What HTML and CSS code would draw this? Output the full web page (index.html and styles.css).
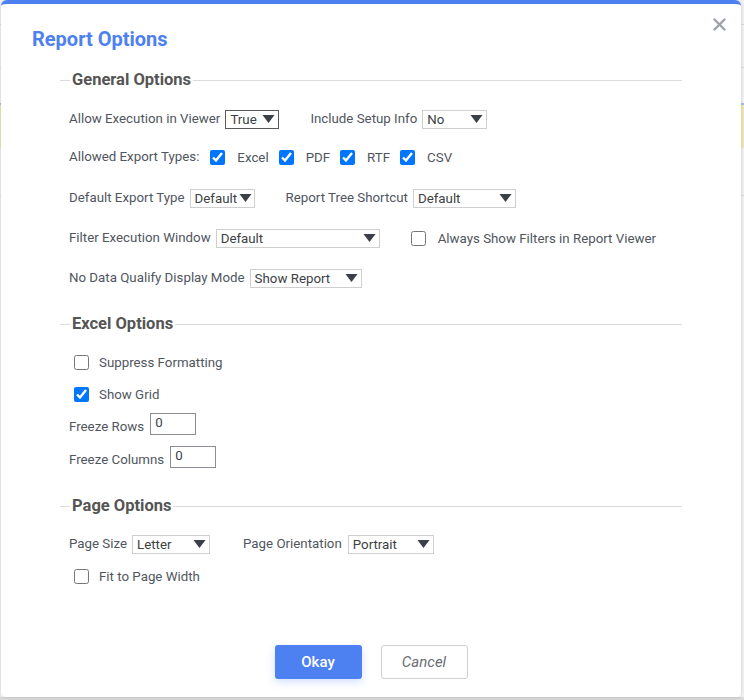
FILE: index.html
```html
<!DOCTYPE html>
<html>
<head>
<meta charset="utf-8">
<link rel="stylesheet" href="styles.css">
</head>
<body>
<div class="dialog">
  <div class="header">
    <h1 class="title">Report Options</h1>
    <button class="close" aria-label="Close">
      <svg width="13" height="13" viewBox="0 0 13 13"><path d="M1.5 1.5 L11.5 11.5 M11.5 1.5 L1.5 11.5" stroke="#9da1a8" stroke-width="2.4" stroke-linecap="round"/></svg>
    </button>
  </div>

  <div class="content">
    <section class="section first">
      <div class="legend"><span class="legend-text">General Options</span></div>

      <div class="row r1">
        <span class="label">Allow Execution in Viewer</span>
        <div class="sel sel-true focused"><span>True</span><svg class="arrow" viewBox="0 0 12 8"><path d="M0 0H12L6 8Z"/></svg></div>
        <span class="label gap-left">Include Setup Info</span>
        <div class="sel sel-no"><span>No</span><svg class="arrow" viewBox="0 0 12 8"><path d="M0 0H12L6 8Z"/></svg></div>
      </div>

      <div class="row r2">
        <span class="label">Allowed Export Types:</span>
        <label class="chk-inline first-chk"><input type="checkbox" checked><span>Excel</span></label>
        <label class="chk-inline"><input type="checkbox" checked><span>PDF</span></label>
        <label class="chk-inline"><input type="checkbox" checked><span>RTF</span></label>
        <label class="chk-inline"><input type="checkbox" checked><span>CSV</span></label>
      </div>

      <div class="row r3">
        <span class="label">Default Export Type</span>
        <div class="sel sel-export"><span>Default</span><svg class="arrow" viewBox="0 0 12 8"><path d="M0 0H12L6 8Z"/></svg></div>
        <span class="label gap-left">Report Tree Shortcut</span>
        <div class="sel sel-tree"><span>Default</span><svg class="arrow" viewBox="0 0 12 8"><path d="M0 0H12L6 8Z"/></svg></div>
      </div>

      <div class="row r4">
        <span class="label">Filter Execution Window</span>
        <div class="sel sel-filter"><span>Default</span><svg class="arrow" viewBox="0 0 12 8"><path d="M0 0H12L6 8Z"/></svg></div>
        <label class="chk-row gap-left-chk"><input type="checkbox"><span>Always Show Filters in Report Viewer</span></label>
      </div>

      <div class="row r5">
        <span class="label">No Data Qualify Display Mode</span>
        <div class="sel sel-nodata"><span>Show Report</span><svg class="arrow" viewBox="0 0 12 8"><path d="M0 0H12L6 8Z"/></svg></div>
      </div>
    </section>

    <section class="section">
      <div class="legend"><span class="legend-text">Excel Options</span></div>
      <div class="row r-first">
        <label class="chk-row indent"><input type="checkbox"><span>Suppress Formatting</span></label>
      </div>
      <div class="row r-next">
        <label class="chk-row indent"><input type="checkbox" checked><span>Show Grid</span></label>
      </div>
      <div class="row freeze">
        <span class="label">Freeze Rows</span>
        <input class="num num-rows" type="text" value="0">
      </div>
      <div class="row freeze">
        <span class="label">Freeze Columns</span>
        <input class="num num-cols" type="text" value="0">
      </div>
    </section>

    <section class="section">
      <div class="legend"><span class="legend-text">Page Options</span></div>
      <div class="row r-first">
        <span class="label">Page Size</span>
        <div class="sel sel-size"><span>Letter</span><svg class="arrow" viewBox="0 0 12 8"><path d="M0 0H12L6 8Z"/></svg></div>
        <span class="label gap-left-page">Page Orientation</span>
        <div class="sel sel-orient"><span>Portrait</span><svg class="arrow" viewBox="0 0 12 8"><path d="M0 0H12L6 8Z"/></svg></div>
      </div>
      <div class="row r-next">
        <label class="chk-row indent"><input type="checkbox"><span>Fit to Page Width</span></label>
      </div>
    </section>
  </div>

  <div class="footer">
    <button class="btn btn-ok">Okay</button>
    <button class="btn btn-cancel">Cancel</button>
  </div>
</div>
</body>
</html>
```

FILE: styles.css
```css
* { box-sizing: border-box; }

html, body {
  margin: 0;
  padding: 0;
}

body {
  width: 744px;
  height: 700px;
  overflow: hidden;
  font-family: Roboto, "Liberation Sans", Arial, sans-serif;
  background:
    linear-gradient(to bottom,
      #f4f4f4 0, #f4f4f4 24px,
      #dddddd 24px, #dddddd 25px,
      #f4f4f4 25px, #f4f4f4 67px,
      #dddddd 67px, #dddddd 68px,
      #f4f4f4 68px, #f4f4f4 103px,
      #a9c0ee 103px, #a9c0ee 105px,
      #f1ecb4 105px, #f1ecb4 148px,
      #f4f4f4 148px, #f4f4f4 195px,
      #dddddd 195px, #dddddd 196px,
      #f4f4f4 196px, #f4f4f4 697px,
      #dcdcdc 697px);
}

.dialog {
  margin-left: 1px;
  width: 740px;
  height: 697px;
  background: #fff;
  border-top: 4px solid #4d80f0;
  border-radius: 6px 6px 4px 4px;
  box-shadow: 0 0 4px rgba(0, 0, 0, 0.18);
  display: flex;
  flex-direction: column;
}

.header {
  display: flex;
  justify-content: space-between;
  align-items: flex-start;
  padding: 0 15px 0 31px;
}

.title {
  margin: 23px 0 0 0;
  font-size: 20px;
  line-height: 24px;
  font-weight: 700;
  color: #4d80f0;
}

.close {
  margin-top: 14px;
  padding: 0;
  border: 0;
  background: none;
  width: 13px;
  height: 13px;
  display: block;
}
.close svg { display: block; }

.content {
  padding: 0 59px;
}

.section { margin-top: 26px; }
.section.first { margin-top: 19px; }

.legend {
  display: flex;
  align-items: center;
  height: 20px;
}
.legend::before {
  content: "";
  width: 10px;
  border-top: 1px solid #dcdcdc;
}
.legend::after {
  content: "";
  flex: 1;
  border-top: 1px solid #dcdcdc;
}
.legend-text {
  padding: 0 2px;
  font-size: 16.5px;
  font-weight: 700;
  color: #555555;
  line-height: 20px;
}

.row {
  display: flex;
  align-items: center;
  height: 20px;
  margin-left: 9px;
  font-size: 13.3px;
  color: #505660;
}
.r1 { margin-top: 19px; }
.r2 { margin-top: 18px; }
.r3 { margin-top: 21px; }
.r4 { margin-top: 20px; }
.r5 { margin-top: 20px; }
.r-first { margin-top: 18px; }
.r-next { margin-top: 12px; }

.label {
  line-height: 20px;
  white-space: nowrap;
}
.gap-left { margin-left: 31px; }
.gap-left-page { margin-left: 33px; }

.sel {
  display: flex;
  align-items: center;
  justify-content: space-between;
  height: 19px;
  margin-left: 5px;
  border: 1px solid #cfcfcf;
  padding: 0 3px 0 4px;
  color: #3c3f44;
  font-size: 13.3px;
  white-space: nowrap;
}
.sel.focused { border-color: #5a5a5a; }
.arrow {
  width: 13px;
  height: 8px;
  fill: #3a3f48;
  flex: none;
}
.sel-true { width: 54px; }
.sel-no { width: 65px; }
.sel-export { width: 65px; padding-right: 2px; }
.sel-tree { width: 103px; }
.sel-filter { width: 164px; }
.sel-nodata { width: 112px; }
.sel-size { width: 78px; }
.sel-orient { width: 86px; margin-left: 6px; }

input[type="checkbox"] {
  width: 15px;
  height: 15px;
  margin: 0;
  flex: none;
}

.chk-inline {
  display: flex;
  align-items: center;
  margin-left: 10px;
}
.chk-inline.first-chk { margin-left: 11px; }
.chk-inline span { margin-left: 12px; }

.chk-row {
  display: flex;
  align-items: center;
  white-space: nowrap;
}
.chk-row span { margin-left: 12px; }
.gap-left-chk { margin-left: 31px; }
.indent { margin-left: 5px; }
.indent span { margin-left: 10px; }

.freeze {
  align-items: flex-start;
  height: 24px;
  margin-top: 9px;
}
.freeze .label { margin-top: 4px; }
.num {
  width: 46px;
  height: 22px;
  margin-left: 6px;
  border: 1px solid #8a8d93;
  padding: 0 4px 3px;
  font-family: Roboto, "Liberation Sans", Arial, sans-serif;
  font-size: 13.3px;
  color: #3c3f44;
  outline: none;
}

.footer {
  margin-top: auto;
  padding-bottom: 18px;
  display: flex;
  justify-content: center;
  gap: 19px;
}
.btn {
  width: 87px;
  height: 34px;
  border-radius: 3px;
  font-family: Roboto, "Liberation Sans", Arial, sans-serif;
  font-size: 15px;
  cursor: pointer;
}
.btn-ok {
  background: #4d80f0;
  border: 0;
  color: #fff;
  font-weight: 500;
  box-shadow: 0 3px 8px rgba(77, 128, 240, 0.25);
}
.btn-cancel {
  background: #fff;
  border: 1px solid #cfcfcf;
  color: #6a6d72;
  font-style: italic;
}
```
